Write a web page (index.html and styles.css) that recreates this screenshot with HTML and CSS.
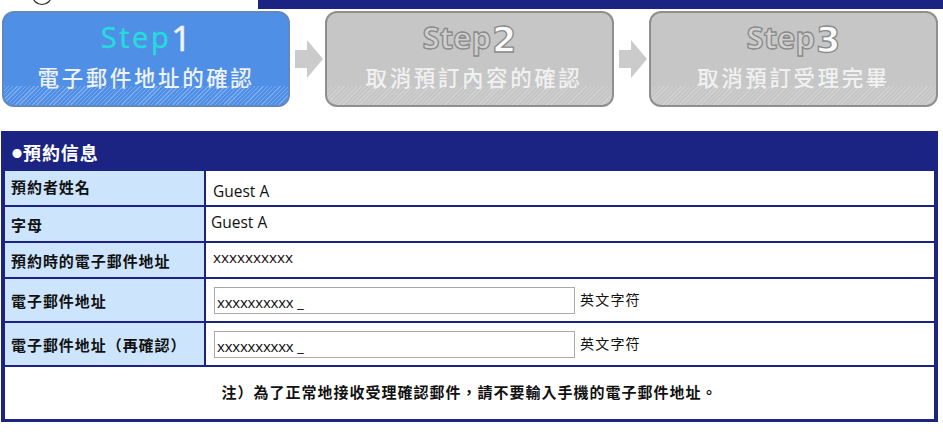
FILE: index.html
```html
<!DOCTYPE html>
<html lang="zh-Hant">
<head>
<meta charset="utf-8">
<title>預約信息</title>
<link rel="stylesheet" href="styles.css">
</head>
<body>
<header class="top">
  <div class="logo">
    <svg class="logo-mark" width="26" height="9" viewBox="0 0 26 9" aria-hidden="true"><circle cx="13" cy="-5" r="9.5" fill="none" stroke="#222" stroke-width="1.2"/></svg>
  </div>
  <div class="top-bar"></div>
</header>
<nav class="steps">
  <div class="step step-active">
    <div class="step-head"><span class="step-word">Step</span><span class="step-num">1</span></div>
    <div class="step-title">電子郵件地址的確認</div>
  </div>
  <svg class="arrow" width="35" height="38" viewBox="0 0 35 38" aria-hidden="true"><path d="M5 10H17V0L33 19 17 38V28H5Z" fill="#cbcbcb"/></svg>
  <div class="step">
    <div class="step-head"><span class="step-word">Step</span><span class="step-num">2</span></div>
    <div class="step-title step-title-shift">取消預訂內容的確認</div>
  </div>
  <svg class="arrow" width="35" height="38" viewBox="0 0 35 38" aria-hidden="true"><path d="M5 10H17V0L33 19 17 38V28H5Z" fill="#cbcbcb"/></svg>
  <div class="step">
    <div class="step-head"><span class="step-word">Step</span><span class="step-num">3</span></div>
    <div class="step-title">取消預訂受理完畢</div>
  </div>
</nav>
<section class="panel">
  <h2 class="panel-title"><span class="bullet">●</span>預約信息</h2>
  <div class="row row-s">
    <div class="label label-up">預約者姓名</div>
    <div class="value value-guest1">Guest A</div>
  </div>
  <div class="row row-s">
    <div class="label label-down">字母</div>
    <div class="value value-guest2">Guest A</div>
  </div>
  <div class="row row-s">
    <div class="label">預約時的電子郵件地址</div>
    <div class="value value-mail">xxxxxxxxxx</div>
  </div>
  <div class="row row-l">
    <div class="label">電子郵件地址</div>
    <div class="value value-input"><input class="field" type="text" value="xxxxxxxxxx _"><span class="hint">英文字符</span></div>
  </div>
  <div class="row row-l">
    <div class="label">電子郵件地址（再確認）</div>
    <div class="value value-input"><input class="field" type="text" value="xxxxxxxxxx _"><span class="hint">英文字符</span></div>
  </div>
  <div class="note">注）為了正常地接收受理確認郵件，請不要輸入手機的電子郵件地址。</div>
</section>
</body>
</html>
```
FILE: styles.css
```css
* { box-sizing: border-box; }
html, body { margin: 0; padding: 0; background: #fff; }
body {
  width: 943px;
  height: 432px;
  overflow: hidden;
  font-family: "Noto Sans CJK TC", "Noto Sans", sans-serif;
  color: #111;
}
.top { display: flex; height: 9px; }
.logo { width: 258px; padding-left: 29px; overflow: hidden; }
.logo-mark { display: block; }
.top-bar { flex: 1; background: #1b2483; }

.steps { display: flex; align-items: center; margin: 2px 5px 0 2px; height: 96px; }
.step {
  width: 289px;
  height: 96px;
  border: 2px solid #8f8f8f;
  border-radius: 12px;
  background:
    repeating-linear-gradient(135deg, rgba(255,255,255,.2) 0 1px, transparent 1px 3px) bottom / 100% 19px no-repeat,
    #c6c6c6;
  display: flex;
  flex-direction: column;
  align-items: center;
  padding-top: 5px;
  color: #f4f4f4;
}
.step-active {
  width: 288px;
  border-color: #6288c0;
  background:
    repeating-linear-gradient(135deg, rgba(255,255,255,.25) 0 1px, transparent 1px 3px) bottom / 100% 19px no-repeat,
    #4f8fe6;
}
.step-head { height: 38px; font-family: "Open Sans", sans-serif; line-height: 38px; white-space: nowrap; }
.step-word {
  font-size: 31px;
  font-weight: 700;
  color: #d0d0d0;
  -webkit-text-stroke: 1.3px #8a8a8a;
}
.step-num {
  font-family: "DejaVu Sans", sans-serif;
  font-size: 35px;
  font-weight: 700;
  margin-left: 1px;
  vertical-align: -3px;
  color: #fafafa;
  -webkit-text-stroke: 1.3px #8a8a8a;
}
.step-active .step-word { font-size: 29px; font-weight: 400; letter-spacing: 2.6px; color: #25dcdc; -webkit-text-stroke: .4px #25dcdc; }
.step-active .step-num { font-family: "Open Sans", sans-serif; font-weight: 400; margin-left: 0; color: #f2f4f8; -webkit-text-stroke: .6px #f2f4f8; }
.step-title { font-size: 21.5px; font-weight: 500; line-height: 30px; letter-spacing: 2.6px; margin-top: 6px; white-space: nowrap; color: #eef2f6; }
.step:not(.step-active) .step-title { color: #f1f1f1; }
.step-title-shift { padding-left: 9px; }
.arrow { flex: none; }

.panel {
  width: 937px;
  margin: 24px 0 0 1px;
  background: #1b2483;
  padding: 0 4px 3px;
}
.panel-title {
  margin: 0;
  height: 40px;
  font-size: 18px;
  font-weight: 700;
  line-height: 43px;
  padding-left: 7px;
  letter-spacing: .9px;
  color: #fff;
}
.bullet { font-size: 10px; letter-spacing: 0; margin-right: 1px; vertical-align: 2px; }
.row { display: flex; margin-bottom: 2px; }
.row-s { height: 34px; }
.row-l { height: 42px; }
.label {
  width: 199px;
  margin-right: 2px;
  background: #cce4fc;
  padding-left: 6px;
  display: flex;
  align-items: center;
  font-size: 15px;
  font-weight: 700;
  letter-spacing: .95px;
  white-space: nowrap;
}
.label-up { padding-bottom: 3px; }
.label-down { padding-top: 1px; }
.value {
  flex: 1;
  background: #fff;
  display: flex;
  align-items: center;
  font-family: "Open Sans", "Noto Sans", sans-serif;
  font-size: 15.5px;
}
.value-guest1 { padding: 6px 0 0 7px; }
.value-guest2 { padding: 0 0 4px 5px; }
.value-mail { padding: 0 0 7px 7px; font-size: 15.3px; }
.value-input { padding-left: 8px; }
.field {
  width: 361px;
  height: 27px;
  border: 1px solid #aaa;
  background: #fff;
  padding: 4px 2px 0;
  font-family: "Open Sans", sans-serif;
  font-size: 15px;
  letter-spacing: -.2px;
  color: #111;
  outline: none;
  border-radius: 0;
}
.hint { margin: 0 0 2px 5px; font-family: "Noto Sans CJK TC", sans-serif; font-size: 14px; letter-spacing: 1.2px; }
.note {
  height: 52px;
  background: #fff;
  display: flex;
  align-items: center;
  justify-content: center;
  font-size: 15px;
  font-weight: 700;
  letter-spacing: 1px;
  padding-bottom: 4px;
}
```
